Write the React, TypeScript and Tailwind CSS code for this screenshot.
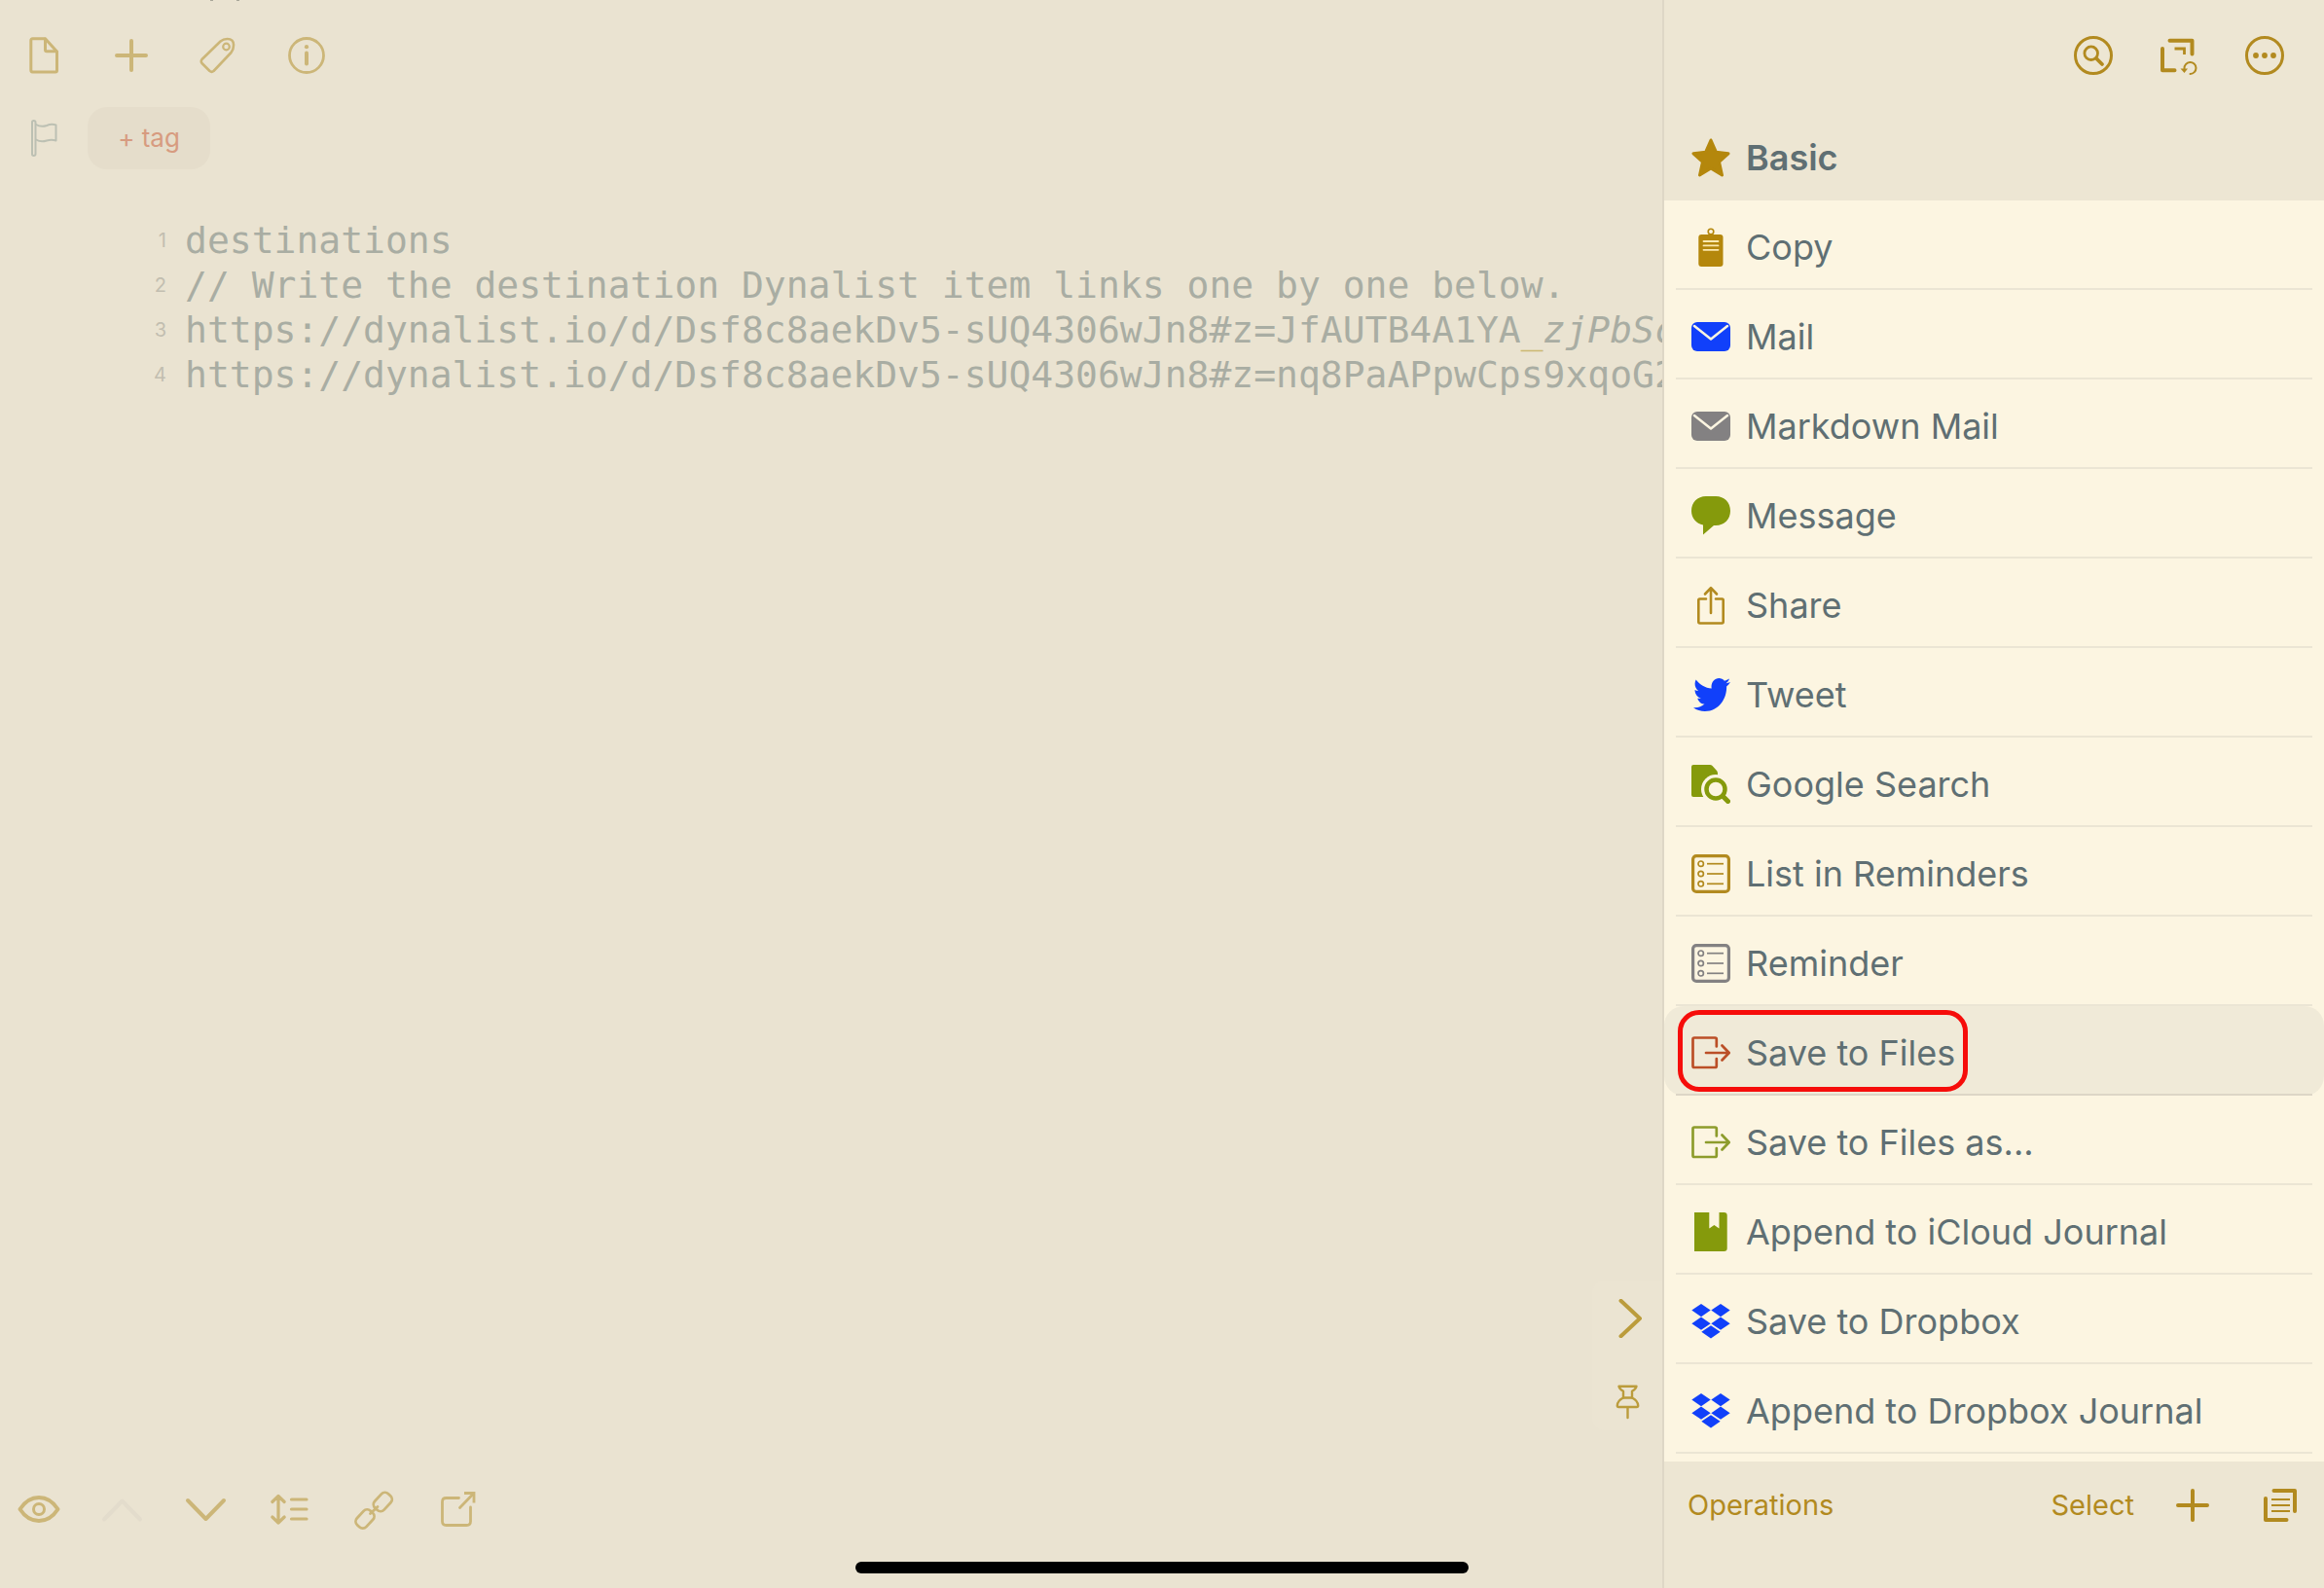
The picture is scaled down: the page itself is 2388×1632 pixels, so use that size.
import type { ReactNode } from 'react';
import clsx from 'clsx';
import { FaTwitter } from 'react-icons/fa';

type IconProps = {
  size?: number;
  className?: string;
  children: ReactNode;
};

// Shared frame for all line icons
function Icon({ size = 40, className, children }: IconProps) {
  return (
    <svg
      width={size}
      height={size}
      viewBox={`0 0 ${size} ${size}`}
      fill="none"
      stroke="currentColor"
      strokeLinecap="round"
      strokeLinejoin="round"
      className={clsx('shrink-0', className)}
      aria-hidden="true"
    >
      {children}
    </svg>
  );
}

function PlusIcon() {
  return (
    <Icon>
      <path strokeWidth={4} d="M20 5v30M5 20h30" />
    </Icon>
  );
}

function MailIcon({ className }: { className: string }) {
  return (
    <Icon className={className}>
      <rect x="0" y="5" width="40" height="30" rx="6" fill="currentColor" stroke="none" />
      <path stroke="#fcf5e1" strokeWidth={2.5} d="M3 9L20 22.5L37 9" />
    </Icon>
  );
}

function ListIcon({ className }: { className: string }) {
  return (
    <Icon className={className}>
      <rect x="1.6" y="1.6" width="36.8" height="36.8" rx="3.5" strokeWidth={3.2} />
      {[9.7, 20, 30.3].map((y) => (
        <g key={y} strokeWidth={1.7}>
          <circle cx="9.7" cy={y} r="2.7" />
          <path strokeLinecap="butt" d={`M16 ${y}h17`} />
        </g>
      ))}
    </Icon>
  );
}

function ExportIcon({ className }: { className: string }) {
  return (
    <Icon className={className}>
      <path strokeWidth={2.7} d="M25.8 13.5V6Q25.8 4.5 24.3 4.5H3Q1.5 4.5 1.5 6V33.5Q1.5 35 3 35H24.3Q25.8 35 25.8 33.5V26" />
      <path strokeWidth={2.7} d="M15 20H38.5M31.5 12.5L38.7 20L31.5 27.5" />
    </Icon>
  );
}

function DropboxIcon() {
  return (
    <Icon className="text-[#1140fa]">
      <g fill="currentColor" stroke="none">
        <path d="M10 2l9.7 6.6L10 15.2L.3 8.6z" />
        <path d="M30 2l9.7 6.6L30 15.2l-9.7-6.6z" />
        <path d="M10 15.6l9.7 6.6L10 28.8L.3 22.2z" />
        <path d="M30 15.6l9.7 6.6L30 28.8l-9.7-6.6z" />
        <path d="M20 24.2l9.7 6.6L20 37.6l-9.7-6.8z" />
      </g>
    </Icon>
  );
}

const actions: { label: string; icon: ReactNode; selected?: boolean }[] = [
  {
    label: 'Copy',
    icon: (
      <Icon className="text-[#b4870c]">
        <circle cx="20" cy="4" r="2.8" strokeWidth={1.6} />
        <rect x="7.3" y="7" width="25.2" height="33" rx="3" fill="currentColor" stroke="none" />
        <path stroke="#fbe9b0" strokeWidth={1.8} d="M12.5 14h15M12.5 18.4h15M12.5 22.8h15" />
      </Icon>
    ),
  },
  { label: 'Mail', icon: <MailIcon className="text-[#1140fa]" /> },
  { label: 'Markdown Mail', icon: <MailIcon className="text-[#838182]" /> },
  {
    label: 'Message',
    icon: (
      <Icon className="text-[#859a0c]">
        <path fill="currentColor" stroke="none" d="M15 0H25C34 0 40 6.5 40 15S34 30 25 30H23L12 39.5V29.5C5 28 0 22.5 0 15C0 6.5 6 0 15 0Z" />
      </Icon>
    ),
  },
  {
    label: 'Share',
    icon: (
      <Icon className="text-[#b28a1f]">
        <path strokeWidth={2.6} d="M15 13.5H8.5Q7.3 13.5 7.3 14.7V37Q7.3 38.5 8.8 38.5H31.2Q32.7 38.5 32.7 37V14.7Q32.7 13.5 31.5 13.5H25" />
        <path strokeWidth={2.6} d="M20 28V2.5M14 8.5L20 2.2L26 8.5" />
      </Icon>
    ),
  },
  {
    label: 'Tweet',
    icon: (
      <span className="flex size-10 shrink-0 items-center justify-end">
        <FaTwitter className="h-[42px] w-[38px] shrink-0 text-[#1140fa]" preserveAspectRatio="none" />
      </span>
    ),
  },
  {
    label: 'Google Search',
    icon: (
      <Icon className="text-[#859a0c]">
        <path fill="currentColor" stroke="none" d="M2 0H19Q20.5 0 21.5 1L26 6Q27 7 27 9V33H2Q0 33 0 31V2Q0 0 2 0Z" />
        <circle cx="25" cy="25" r="15" fill="#fcf5e1" stroke="none" />
        <circle cx="25" cy="25" r="9.5" strokeWidth={4.5} />
        <path strokeWidth={5} d="M32.5 32.5L37.5 37.5" />
      </Icon>
    ),
  },
  { label: 'List in Reminders', icon: <ListIcon className="text-[#b28a1f]" /> },
  { label: 'Reminder', icon: <ListIcon className="text-[#838182]" /> },
  { label: 'Save to Files', icon: <ExportIcon className="text-[#bb4f27]" />, selected: true },
  { label: 'Save to Files as...', icon: <ExportIcon className="text-[#8d9c2c]" /> },
  {
    label: 'Append to iCloud Journal',
    icon: (
      <Icon className="text-[#859a0c]">
        <path fill="currentColor" stroke="none" d="M3 0H18.3V16.5L23.4 13L28.5 16.5V0H33.5Q36.7 0 36.7 3V37Q36.7 40 33.5 40H3Z" />
      </Icon>
    ),
  },
  { label: 'Save to Dropbox', icon: <DropboxIcon /> },
  { label: 'Append to Dropbox Journal', icon: <DropboxIcon /> },
];

const lines: ReactNode[] = [
  'destinations',
  '// Write the destination Dynalist item links one by one below.',
  <>
    https://dynalist.io/d/Dsf8c8aekDv5-sUQ4306wJn8#z=JfAUTB4A1YA
    <span className="text-[#cdb973]">_</span>
    <em>zjPbSc</em>
  </>,
  'https://dynalist.io/d/Dsf8c8aekDv5-sUQ4306wJn8#z=nq8PaAPpwCps9xqoG2',
];

function Editor() {
  return (
    <main className="relative flex min-w-0 flex-1 flex-col overflow-hidden text-[#ccb678]">
      {/* Tail of the status bar clock */}
      <svg width="32" height="2" viewBox="0 0 32 2" className="absolute top-0 left-[215px] fill-[#a9a799]" aria-hidden="true">
        <path d="M1 0h3v1H1zM28 0h3v1h-3z" />
      </svg>

      {/* Top toolbar */}
      <div className="flex gap-[50px] pt-[37px] pl-[25px]">
        <button type="button" aria-label="Drafts">
          <Icon>
            <path strokeWidth={3} d="M8.5 2.8H21.5L33.5 16V35.5Q33.5 37 32 37H8.5Q6.8 36.8 6.8 35V4.5Q6.8 2.8 8.5 2.8Z" />
            <path strokeWidth={3} d="M21.5 3V14Q21.5 15.8 23 15.8H33" />
          </Icon>
        </button>
        <button type="button" aria-label="New draft">
          <PlusIcon />
        </button>
        <button type="button" aria-label="Tags">
          <Icon>
            <path strokeWidth={2.6} d="M21.5 5.5Q24.500 3 28.5 3Q35.3 3 35 9.5Q35 14 32.5 17L14.5 36Q12.5 37.6 10.5 36L2.5 28Q1 26 2.5 24Z" />
            <circle cx="27.5" cy="11" r="3.3" strokeWidth={2.2} />
          </Icon>
        </button>
        <button type="button" aria-label="Info">
          <Icon>
            <circle cx="20" cy="20" r="17.5" strokeWidth={2.8} />
            <circle cx="20" cy="11.2" r="2.1" fill="currentColor" stroke="none" />
            <path strokeWidth={4} d="M20 17.5V28.5" />
          </Icon>
        </button>
      </div>

      {/* Tag row */}
      <div className="flex items-center gap-[25px] pt-[33px] pl-[25px]">
        <button type="button" aria-label="Flag" className="text-[#bcc0b3]">
          <Icon>
            <rect x="8" y="2" width="3.5" height="36" rx="1.7" strokeWidth={2} />
            <path strokeWidth={2} d="M12 6Q17 9 23 7Q28 5 32.5 6.5V22.5Q28 21 23 22.5Q17 24.5 12 21.5" />
          </Icon>
        </button>
        <button
          type="button"
          className="h-16 w-[126px] rounded-[20px] bg-[#e5ddcb] text-[26px] leading-8 text-[#d79b80]"
        >
          + tag
        </button>
      </div>

      {/* Text */}
      <ol className="pt-[50px]">
        {lines.map((line, i) => (
          <li key={i} className="flex h-[46px] items-center">
            <span className="w-[171px] shrink-0 text-right text-[20px] leading-6 text-[#c2beb0]">{i + 1}</span>
            <code className="ml-[19px] font-['DejaVu_Sans_Mono',monospace] text-[38px] leading-[46px] whitespace-pre text-[#a9ada3]">
              {line}
            </code>
          </li>
        ))}
      </ol>

      {/* Bottom toolbar */}
      <div className="mt-auto flex gap-[42px] pb-[59px] pl-[18px]">
        <button type="button" aria-label="Preview">
          <Icon size={44}>
            <path strokeWidth={4} d="M2.5 22C8 13.5 14 10 22 10S36 13.5 41.5 22C36 30.5 30 34 22 34S8 30.5 2.5 22Z" />
            <circle cx="22" cy="22" r="5.5" strokeWidth={3} />
          </Icon>
        </button>
        <button type="button" aria-label="Previous draft" disabled className="text-[#e3dccc]">
          <Icon size={44}>
            <path strokeWidth={4} d="M3 32.5L21.5 13.5L40 32.5" />
          </Icon>
        </button>
        <button type="button" aria-label="Next draft">
          <Icon size={44}>
            <path strokeWidth={4} d="M3 13L21.5 32L40 13" />
          </Icon>
        </button>
        <button type="button" aria-label="Line spacing">
          <Icon size={44}>
            <path strokeWidth={3.2} d="M10 9V36M3.8 14.5L10 8.5L16.2 14.5M3.8 30L10 36L16.2 30M23.5 12H39M23.5 22H39M23.5 32H39" />
          </Icon>
        </button>
        <button type="button" aria-label="Link">
          <Icon size={44}>
            <rect x="21.3" y="8" width="20" height="13" rx="5" strokeWidth={2.8} transform="rotate(-47 31.3 14.5)" />
            <rect x="3" y="25.5" width="20" height="13" rx="5" strokeWidth={2.8} transform="rotate(-47 13 32)" />
            <path strokeWidth={2.8} d="M18.5 26.5L26 19.5" />
          </Icon>
        </button>
        <button type="button" aria-label="Open in new window">
          <Icon size={44}>
            <path strokeWidth={2.8} d="M23.5 10.5H10.5Q6.5 10.5 6.5 14.5V34.5Q6.5 38.5 10.5 38.5H31.5Q35.5 38.5 35.5 34.5V20" />
            <path strokeWidth={2.8} d="M24.5 20.5L38 6.5" />
            <path strokeWidth={2.8} strokeLinejoin="miter" strokeLinecap="butt" d="M29 5.5H39V15.5" />
          </Icon>
        </button>
      </div>

      {/* Pane handle */}
      <div className="absolute right-0 bottom-[162px] flex h-[154px] w-[72px] flex-col gap-[46px] rounded-l-xl bg-[#ebe4d2] pt-[19px] pl-5">
        <button type="button" aria-label="Close action list" className="text-[#bb9c3c]">
          <Icon>
            <path strokeWidth={4} d="M9.5 1.8L29 20L9.5 38.2" />
          </Icon>
        </button>
        <button type="button" aria-label="Pin action list" className="text-[#bb9c3c]">
          <Icon>
            <path strokeWidth={2.4} d="M7.5 3.8H25.5Q25 6.5 21 8.8V15.5H12V8.8Q8 6.5 7.5 3.8Z" />
            <path strokeWidth={2.4} d="M12 15.5Q6 18.5 5.8 23.5Q5.8 25 7.3 25H25.7Q27.2 25 27.2 23.5Q27 18.5 21 15.5M16.5 25V36" />
          </Icon>
        </button>
      </div>
    </main>
  );
}

function ActionList() {
  return (
    <aside className="flex w-[680px] shrink-0 flex-col border-l-2 border-[#ded7c6] bg-[#ede6d3] text-[#b28a1f]">
      <div className="flex h-[118px] justify-end gap-12 pt-[37px] pr-[41px]">
        <button type="button" aria-label="Search actions" className="h-10">
          <Icon>
            <circle cx="20" cy="20" r="18.5" strokeWidth={3} />
            <circle cx="17.7" cy="17.7" r="6.8" strokeWidth={2.8} />
            <path strokeWidth={3.8} d="M23.5 23.5L29 29" />
          </Icon>
        </button>
        <button type="button" aria-label="Restore action groups" className="h-10">
          <Icon>
            <path strokeWidth={4} d="M10.5 4.8H33.5V18.5M3 13V35.2H15.5" />
            <path strokeWidth={2.8} strokeLinejoin="miter" strokeLinecap="butt" d="M15.5 13H25.5V19" />
            <path strokeWidth={2} d="M25.5 33.5A6 6 0 1 1 31.5 39" />
            <path fill="currentColor" stroke="none" d="M21.5 33.5H29L25.5 38Z" />
          </Icon>
        </button>
        <button type="button" aria-label="More" className="h-10">
          <Icon>
            <circle cx="20" cy="20" r="18.5" strokeWidth={3} />
            <g fill="currentColor" stroke="none">
              <circle cx="11" cy="20" r="2.9" />
              <circle cx="20" cy="20" r="2.9" />
              <circle cx="29" cy="20" r="2.9" />
            </g>
          </Icon>
        </button>
      </div>

      <h2 className="flex h-[88px] items-center gap-4 pl-7 text-[36px] leading-[46px] font-semibold text-[#5f6f73]">
        <Icon className="text-[#b4870c]">
          <path
            fill="currentColor"
            strokeWidth={3}
            d="M20 2L25.3 14.2L38 15.8L28.5 24.3L31.5 38L20 31L8.5 38L11.5 24.3L2 15.8L14.7 14.2Z"
          />
        </Icon>
        Basic
      </h2>

      <ul className="flex-1 bg-[#fcf5e1]">
        {actions.map(({ label, icon, selected }) => (
          <li key={label} className={clsx('relative', selected && 'rounded-[20px] bg-[#f0ead8]')}>
            <button
              type="button"
              className="flex h-[90px] w-full items-center gap-4 pt-1.5 pl-7 text-[36px] leading-[46px] text-[#5f6f73]"
            >
              {icon}
              {label}
            </button>
            <div className={clsx('mx-3 h-0.5', selected ? 'bg-[#ddd6c6]' : 'bg-[#ebe5d4]')} />
            {selected && (
              <div className="pointer-events-none absolute top-1 left-3.5 h-[84px] w-[298px] rounded-[22px] border-[5px] border-[#f60d0a]" />
            )}
          </li>
        ))}
      </ul>

      <div className="h-[130px] pr-[25px] pl-6 text-[29px] leading-10">
        <div className="flex h-[90px] items-center">
          <button type="button">Operations</button>
          <button type="button" className="mr-10 ml-auto">
            Select
          </button>
          <button type="button" aria-label="Add action" className="mr-[50px]">
            <PlusIcon />
          </button>
          <button type="button" aria-label="Action groups">
            <Icon>
              <path strokeWidth={4} d="M13.5 5H35V26M5 13V35H26.5" />
              <path strokeWidth={2} strokeLinecap="butt" d="M11 14H30M11 20H30M11 26H30" />
            </Icon>
          </button>
        </div>
      </div>
    </aside>
  );
}

export default function App() {
  return (
    <div className="relative flex min-h-screen bg-[#eae3d1] font-[Inter,'Liberation_Sans',sans-serif]">
      <Editor />
      <ActionList />
      {/* Home indicator */}
      <div className="absolute bottom-[15px] left-1/2 h-3 w-[630px] -translate-x-1/2 rounded-full bg-black" />
    </div>
  );
}
